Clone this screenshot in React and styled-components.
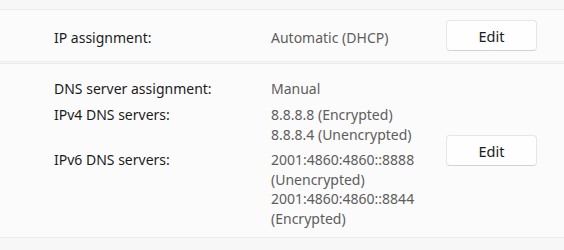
import React from 'react';
import styled, { createGlobalStyle } from 'styled-components';

const GlobalStyle = createGlobalStyle`
    body {
        margin: 0;
        background-color: #f7f7f7;
        font-family: "Noto Sans", "Open Sans", sans-serif;
        -webkit-font-smoothing: antialiased;
    }
`

const rows = [
    { label: 'DNS server assignment:', values: ['Manual'] },
    { label: 'IPv4 DNS servers:', values: ['8.8.8.8 (Encrypted)', '8.8.8.4 (Unencrypted)'] },
    { label: 'IPv6 DNS servers:', values: ['2001:4860:4860::8888', '(Unencrypted)', '2001:4860:4860::8844', '(Encrypted)'] },
];

const App = () => {
    return (
        <React.Fragment>
            <GlobalStyle />
            <Page>
                <Card height="53px">
                    <Grid shift="4px">
                        <Label>IP assignment:</Label>
                        <Value>Automatic (DHCP)</Value>
                    </Grid>
                    <EditButton>Edit</EditButton>
                </Card>
                <Card height="175px">
                    <Grid gap="6px" shift="6px">
                        {rows.map((row) => (
                            <React.Fragment key={row.label}>
                                <Label>{row.label}</Label>
                                <ValueStack>
                                    {row.values.map((v) => <Value key={v}>{v}</Value>)}
                                </ValueStack>
                            </React.Fragment>
                        ))}
                    </Grid>
                    <EditButton>Edit</EditButton>
                </Card>
            </Page>
        </React.Fragment>
    )
}

export default App;

const Page = styled.div`
    width: 564px;
    height: 250px;
    padding-top: 9px;
    box-sizing: border-box;
    display: flex;
    flex-direction: column;
    gap: 1px;
    overflow: hidden;
`

const Card = styled.div`
    height: ${(p) => p.height};
    box-sizing: border-box;
    background-color: #fbfbfb;
    border-top: solid 1px #ececec;
    border-bottom: solid 1px #ececec;
    display: flex;
    align-items: center;
    justify-content: space-between;
    padding: 0 27px 0 54px;
`

const Grid = styled.div`
    display: grid;
    grid-template-columns: 217px auto;
    row-gap: ${(p) => p.gap || '0px'};
    align-items: start;
    padding-top: ${(p) => p.shift || '0px'};
`

const Label = styled.div`
    font-size: 14px;
    line-height: 20px;
    color: #1b1b1b;
`

const ValueStack = styled.div`
    display: flex;
    flex-direction: column;
`

const Value = styled.div`
    font-size: 14px;
    line-height: 19.5px;
    color: #5d5d5d;
`

const EditButton = styled.button`
    width: 91px;
    height: 31px;
    background-color: #fefefe;
    border: solid 1px #e6e6e6;
    border-bottom-color: #d2d2d2;
    border-radius: 4px;
    font-family: "Noto Sans", "Open Sans", sans-serif;
    font-size: 14.5px;
    color: #1b1b1b;
    cursor: pointer;
    padding: 0;
`
